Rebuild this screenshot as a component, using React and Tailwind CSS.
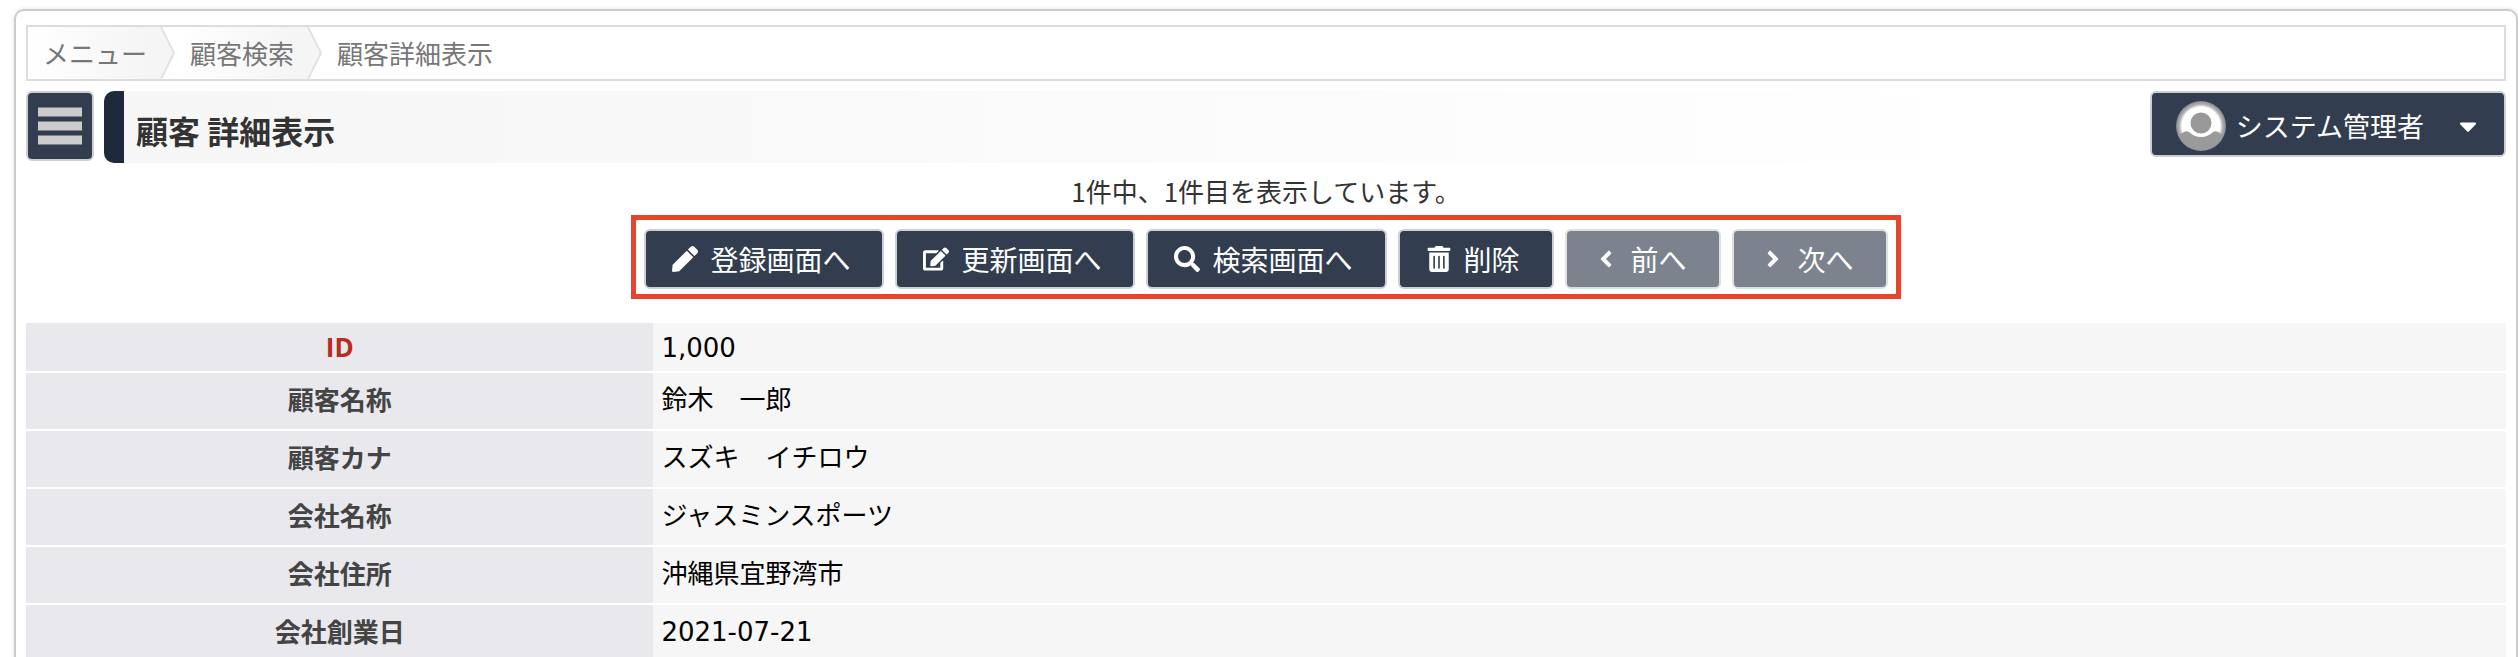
import { FaPen, FaEdit, FaSearch, FaTrashAlt, FaAngleLeft, FaAngleRight, FaCaretDown } from "react-icons/fa";

const crumbs = ["メニュー", "顧客検索", "顧客詳細表示"];

const actions = [
  { label: "登録画面へ", icon: FaPen },
  { label: "更新画面へ", icon: FaEdit },
  { label: "検索画面へ", icon: FaSearch },
  { label: "削除", icon: FaTrashAlt },
  { label: "前へ", icon: FaAngleLeft, disabled: true },
  { label: "次へ", icon: FaAngleRight, disabled: true },
];

const rows = [
  { label: "ID", value: "1,000", key: true },
  { label: "顧客名称", value: "鈴木　一郎" },
  { label: "顧客カナ", value: "スズキ　イチロウ" },
  { label: "会社名称", value: "ジャスミンスポーツ" },
  { label: "会社住所", value: "沖縄県宜野湾市" },
  { label: "会社創業日", value: "2021-07-21" },
];

function Breadcrumb() {
  return (
    <nav className="flex h-14 border-2 border-[#dddddd] text-[26px] leading-[52px] text-[#777777]">
      {crumbs.map((name, i) => (
        <div key={name} className="flex">
          <a
            href="#"
            className={i < crumbs.length - 1 ? "bg-linear-to-r from-white to-[#f5f5f5] pl-[15px]" : "pl-[15px]"}
          >
            {name}
          </a>
          {i < crumbs.length - 1 && (
            <svg className="h-full w-7" viewBox="0 0 28 52" preserveAspectRatio="none">
              <path d="M0 0H14L27 26L14 52H0Z" fill="#f5f5f5" />
              <path d="M14 0L27 26L14 52" fill="none" stroke="#e2e2e2" strokeWidth="2" />
            </svg>
          )}
        </div>
      ))}
    </nav>
  );
}

function MenuButton() {
  return (
    <button
      aria-label="メニュー"
      className="flex h-[70px] w-[68px] shrink-0 flex-col items-center justify-center gap-1 rounded-md border-2 border-[#cccfd4] bg-[#323e4f]"
    >
      <span className="h-[10px] w-11 border-y border-[#7c838c] bg-[#cccccc]" />
      <span className="h-[10px] w-11 border-y border-[#7c838c] bg-[#cccccc]" />
      <span className="h-[10px] w-11 border-y border-[#7c838c] bg-[#cccccc]" />
    </button>
  );
}

function Avatar() {
  return (
    <svg className="size-[50px]" viewBox="0 0 50 50">
      <defs>
        <radialGradient id="ring">
          <stop offset="0.76" stopColor="#ffffff" />
          <stop offset="0.86" stopColor="#b4b4b4" />
          <stop offset="1" stopColor="#858990" />
        </radialGradient>
        <clipPath id="round">
          <circle cx="25" cy="25" r="24" />
        </clipPath>
      </defs>
      <circle cx="25" cy="25" r="25" fill="url(#ring)" />
      <g clipPath="url(#round)">
        <path d="M0 34L5 33Q9 29 13 31Q18 36 25 36Q32 36 37 31Q41 29 45 33L50 34V50H0Z" fill="#9a9a9a" />
      </g>
      <circle cx="25" cy="22" r="12" fill="#999999" stroke="#ffffff" strokeWidth="3" />
    </svg>
  );
}

function ActionButton({ label, icon: Icon, disabled }) {
  return (
    <button
      disabled={disabled}
      className={`flex h-[60px] items-center gap-3 rounded-md border-2 pr-8 pl-[26px] text-[28px] text-white ${
        disabled ? "border-[#dddfe2] bg-[#7c838e]" : "border-[#cccfd4] bg-[#323e4f]"
      }`}
    >
      <Icon size={26} />
      {label}
    </button>
  );
}

export default function App() {
  return (
    <div className="h-screen overflow-hidden bg-white pt-[9px] pl-[14px] font-['Noto_Sans_CJK_JP',sans-serif] text-[26px] text-[#333333]">
      <div className="rounded-t-[10px] border-2 border-b-0 border-[#cccccc] px-[10px] pt-[14px] shadow-[0_0_4px_#dddddd]">
        <Breadcrumb />

        <header className="mt-[10px] flex items-start gap-[10px]">
          <MenuButton />
          <h1 className="h-[72px] flex-1 rounded-l-[10px] border-l-20 border-[#1e2a3b] bg-linear-to-r from-[#f6f6f6] to-white to-95% pt-2 pl-3 text-[32px] leading-[62px] font-bold">
            顧客 詳細表示
          </h1>
          <button className="ml-6 flex h-[66px] items-center rounded-md border-2 border-[#cccfd4] bg-[#323e4f] pt-1 pr-[22px] pl-6 text-[27px] text-white">
            <Avatar />
            <span className="mr-[30px] ml-[10px]">システム管理者</span>
            <FaCaretDown size={28} />
          </button>
        </header>

        <p className="mt-2 text-center leading-[40px]">1件中、1件目を表示しています。</p>

        <div className="mx-auto mt-1 flex w-fit gap-[11px] border-5 border-[#e8432d] px-2 pt-[9px] pb-[5px]">
          {actions.map((a) => (
            <ActionButton key={a.label} {...a} />
          ))}
        </div>

        <table className="mt-6 w-full border-collapse">
          <tbody>
            {rows.map((row) => (
              <tr key={row.label} className="border-b-2 border-white">
                <th
                  className={`w-[25.3%] bg-[#e8e8ed] font-bold ${
                    row.key
                      ? "font-['Open_Sans',sans-serif] leading-[48px] text-[#b92c20]"
                      : "pb-1 leading-[52px] text-[#444444]"
                  }`}
                >
                  {row.label}
                </th>
                <td
                  className={`bg-[#f6f6f6] pl-2 font-['DejaVu_Sans','Noto_Sans_CJK_JP',sans-serif] text-black ${
                    row.key ? "pt-0.5 leading-[46px]" : "pb-0.5 leading-[54px]"
                  }`}
                >
                  {row.value}
                </td>
              </tr>
            ))}
          </tbody>
        </table>
      </div>
    </div>
  );
}
